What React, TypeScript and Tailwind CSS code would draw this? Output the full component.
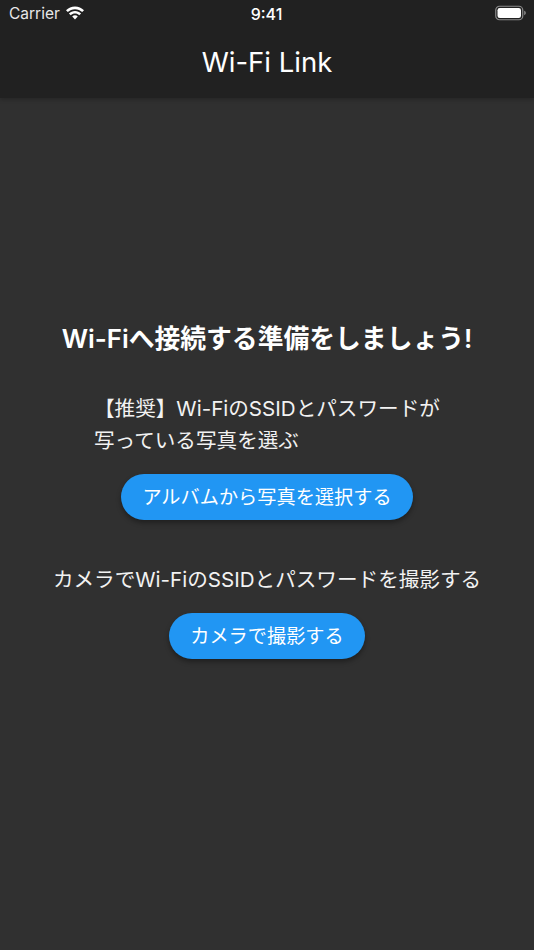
import React from 'react';

const fontStack = "font-['Inter','Noto_Sans_CJK_JP',sans-serif]";

const WifiIcon = () => (
  <svg width="20" height="15" viewBox="0 1 20 15" fill="white" className="overflow-visible">
    <path d="M10 3.200c2.800 0 5.300 1.100 7.200 2.900l1.800-1.900C16.600 1.900 13.500.4 10 .4S3.400 1.900 1 4.200l1.800 1.900C4.700 4.300 7.200 3.200 10 3.200z" />
    <path d="M10 7.600c1.600 0 3.100.6 4.200 1.700l1.900-1.900C14.500 5.900 12.400 5 10 5S5.500 5.900 3.900 7.400l1.900 1.900C6.900 8.200 8.400 7.600 10 7.600z" />
    <path d="M10 9.300c-1.100 0-2 .4-2.800 1.100L10 13.500l2.800-3.100C12 9.700 11.100 9.300 10 9.300z" />
  </svg>
);

const BatteryIcon = () => (
  <svg width="32" height="16" viewBox="0 1 32 16" className="overflow-visible">
    <rect x="0.750" y="1.250" width="27" height="13.500" rx="3.800" fill="none" stroke="#8a8a8a" strokeWidth="1.200" />
    <rect x="2.500" y="3" width="23.500" height="10" rx="2.300" fill="white" />
    <path d="M29.200 5.800c1 .3 1.600 1.200 1.600 2.200s-.6 1.900-1.600 2.200z" fill="#8a8a8a" />
  </svg>
);

const ActionButton = ({ label }: { label: string }) => (
  <button className="h-[46px] px-[21px] rounded-full bg-[#2196f3] text-white text-[19.200px] leading-[46px] shadow-[0_3px_5px_rgba(0,0,0,0.35)]">
    {label}
  </button>
);

const App: React.FC = () => {
  return (
    <div className={`${fontStack} w-full h-[950px] flex flex-col bg-[#303030] text-white overflow-hidden`}>
      <header className="h-[98px] shrink-0 bg-[#212121] flex flex-col shadow-[0_2px_4px_rgba(0,0,0,0.2)]">
        <div className="h-[28px] grid grid-cols-3 items-center pl-[9px] pr-[7px]">
          <div className="flex items-center gap-[5px]">
            <span className="text-[15.500px] text-[#e8e8e8]">Carrier</span>
            <WifiIcon />
          </div>
          <span className="text-center text-[16px] font-medium pr-[3px]">9:41</span>
          <div className="flex justify-end">
            <BatteryIcon />
          </div>
        </div>
        <h1 className="text-center text-[27.500px] leading-[36px] mt-[16px] font-normal">Wi-Fi Link</h1>
      </header>

      <main className="flex flex-col items-center pt-[222px]">
        <h2 className="text-[25.800px] leading-[38px] font-semibold">Wi-Fiへ接続する準備をしましょう!</h2>
        <p className="mt-[35px] w-[346px] text-[20.600px] leading-[32px] text-[#f2f2f2] whitespace-nowrap">
          【推奨】Wi-FiのSSIDとパスワードが
          <br />
          写っている写真を選ぶ
        </p>
        <div className="mt-[17px]">
          <ActionButton label="アルバムから写真を選択する" />
        </div>
        <p className="mt-[44px] text-[20.600px] leading-[32px] text-[#f2f2f2] whitespace-nowrap">カメラでWi-FiのSSIDとパスワードを撮影する</p>
        <div className="mt-[17px]">
          <ActionButton label="カメラで撮影する" />
        </div>
      </main>
    </div>
  );
};

export default App;
